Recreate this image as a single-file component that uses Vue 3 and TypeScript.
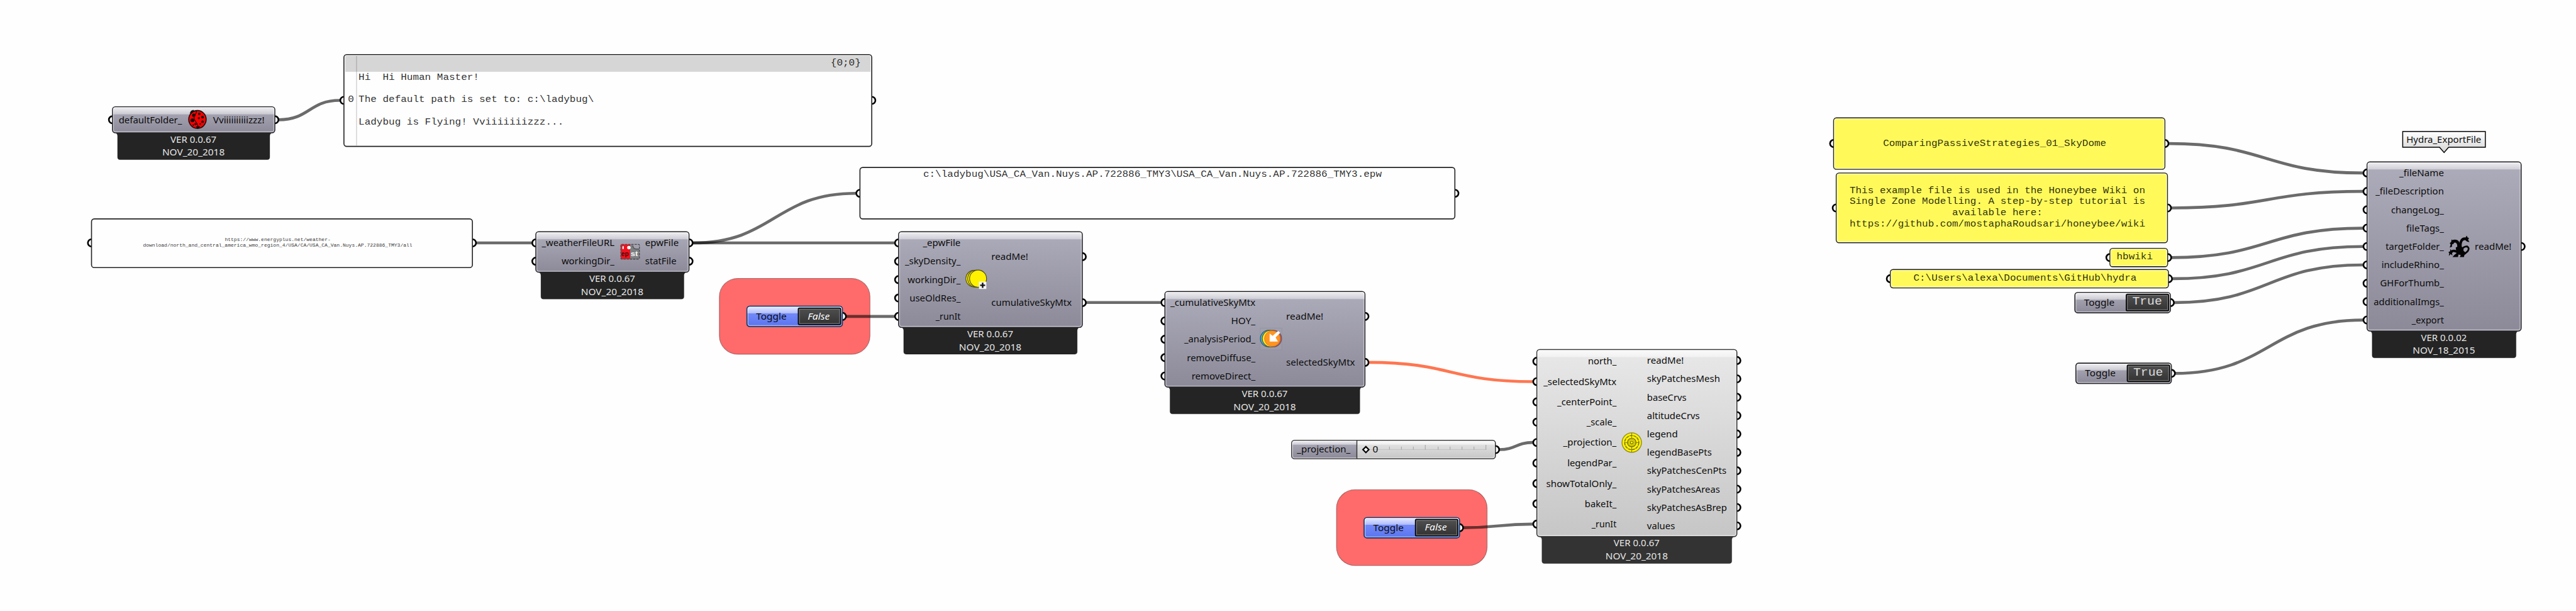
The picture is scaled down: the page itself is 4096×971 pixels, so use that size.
<script setup lang="ts">
type Label = [text: string, y: number, width: number]

interface Component {
  x: number
  right: number
  top: number
  bottom: number
  tone: 'slate' | 'light'
  inEdge: number
  outEdge: number
  inputs: Label[]
  outputs: Label[]
  version: string
  date: string
}

interface Panel {
  x: number
  right: number
  top: number
  bottom: number
  port: number
  tone: 'white' | 'yellow'
  lines: { text: string; x: number; y: number }[]
  small?: boolean
  tree?: boolean
}

interface Toggle {
  x: number
  y: number
  value: 'True' | 'False'
}

const ADVANCE = 13.14
const SMALL_ADVANCE = 6.59

const components: Component[] = [
  {
    x: 245, right: 598.5, top: 232.5, bottom: 289, tone: 'slate', inEdge: 396.4, outEdge: 464,
    inputs: [['defaultFolder_', 260.7, 138]],
    outputs: [['Vviiiiiiiiiizzz!', 260.7, 112]],
    version: 'VER 0.0.67', date: 'NOV_20_2018',
  },
  {
    x: 1167, right: 1500.5, top: 504.5, bottom: 592.5, tone: 'slate', inEdge: 1338, outEdge: 1405,
    inputs: [['_weatherFileURL', 528.7, 158], ['workingDir_', 568.7, 115]],
    outputs: [['epwFile', 528.7, 73], ['statFile', 568.7, 68]],
    version: 'VER 0.0.67', date: 'NOV_20_2018',
  },
  {
    x: 1957, right: 2357, top: 504.5, bottom: 712.5, tone: 'slate', inEdge: 2091.8, outEdge: 2159,
    inputs: [
      ['_epwFile', 528.7, 82], ['_skyDensity_', 568.7, 121], ['workingDir_', 608.7, 115],
      ['useOldRes_', 648.7, 111], ['_runIt', 688.7, 54],
    ],
    outputs: [['readMe!', 558.7, 80], ['cumulativeSkyMtx', 658.8, 175]],
    version: 'VER 0.0.67', date: 'NOV_20_2018',
  },
  {
    x: 2537, right: 2972.5, top: 634.5, bottom: 842.5, tone: 'slate', inEdge: 2734, outEdge: 2801,
    inputs: [
      ['_cumulativeSkyMtx', 658.5, 185], ['HOY_', 698.5, 53], ['_analysisPeriod_', 738.5, 155],
      ['removeDiffuse_', 778.5, 149], ['removeDirect_', 818.5, 139],
    ],
    outputs: [['readMe!', 688.7, 81], ['selectedSkyMtx', 788.8, 150]],
    version: 'VER 0.0.67', date: 'NOV_20_2018',
  },
  {
    x: 3347, right: 3782.5, top: 761, bottom: 1168, tone: 'light', inEdge: 3520.3, outEdge: 3586.8,
    inputs: [
      ['north_', 786.5, 62], ['_selectedSkyMtx', 830.7, 159], ['_centerPoint_', 874.8, 129],
      ['_scale_', 918.9, 65], ['_projection_', 963.2, 116], ['legendPar_', 1008, 107],
      ['showTotalOnly_', 1052.5, 153], ['bakeIt_', 1096.6, 69], ['_runIt', 1140.8, 54],
    ],
    outputs: [
      ['readMe!', 784.7, 80], ['skyPatchesMesh', 824.6, 159], ['baseCrvs', 864.7, 86],
      ['altitudeCrvs', 904.7, 115], ['legend', 944.7, 67], ['legendBasePts', 984.7, 141],
      ['skyPatchesCenPts', 1024.7, 173], ['skyPatchesAreas', 1064.7, 159],
      ['skyPatchesAsBrep', 1104.7, 174], ['values', 1144.7, 61],
    ],
    version: 'VER 0.0.67', date: 'NOV_20_2018',
  },
  {
    x: 5155, right: 5490.5, top: 352.6, bottom: 720.4, tone: 'slate', inEdge: 5322.3, outEdge: 5389.5,
    inputs: [
      ['_fileName', 376.6, 97], ['_fileDescription', 416.6, 149], ['changeLog_', 456.6, 115],
      ['fileTags_', 496.6, 82], ['targetFolder_', 536.6, 127], ['includeRhino_', 576.6, 136],
      ['GHForThumb_', 616.6, 139], ['additionalImgs_', 656.6, 153], ['_export', 696.6, 70],
    ],
    outputs: [['readMe!', 536.6, 80]],
    version: 'VER 0.0.02', date: 'NOV_18_2015',
  },
]

const panels: Panel[] = [
  {
    x: 749, right: 1898.5, top: 118.8, bottom: 318.6, port: 218.5, tone: 'white', tree: true,
    lines: [
      { text: '{0;0}', x: 1809, y: 142 },
      { text: 'Hi  Hi Human Master!', x: 780.8, y: 173.4 },
      { text: '0', x: 757.6, y: 222 },
      { text: 'The default path is set to: c:\\ladybug\\', x: 780.8, y: 222 },
      { text: 'Ladybug is Flying! Vviiiiiiizzz...', x: 780.8, y: 270.6 },
    ],
  },
  {
    x: 199.3, right: 1028.8, top: 476.5, bottom: 582.5, port: 528.7, tone: 'white', small: true,
    lines: [
      { text: 'https://www.energyplus.net/weather-', x: 489.5, y: 525 },
      { text: 'download/north_and_central_america_wmo_region_4/USA/CA/USA_CA_Van.Nuys.AP.722886_TMY3/all', x: 311.5, y: 537.2 },
    ],
  },
  {
    x: 1872.8, right: 3168.4, top: 364.5, bottom: 476.5, port: 420.8, tone: 'white',
    lines: [
      { text: 'c:\\ladybug\\USA_CA_Van.Nuys.AP.722886_TMY3\\USA_CA_Van.Nuys.AP.722886_TMY3.epw', x: 2010.5, y: 385 },
    ],
  },
  {
    x: 3993.3, right: 4714.6, top: 256.7, bottom: 368.5, port: 312.4, tone: 'yellow',
    lines: [{ text: 'ComparingPassiveStrategies_01_SkyDome', x: 4101, y: 317.4 }],
  },
  {
    x: 3999, right: 4720.2, top: 376.7, bottom: 528.3, port: 452.7, tone: 'yellow',
    lines: [
      { text: 'This example file is used in the Honeybee Wiki on', x: 4028, y: 420.3 },
      { text: 'Single Zone Modelling. A step-by-step tutorial is', x: 4028, y: 444.4 },
      { text: 'available here:', x: 4251.4, y: 468.5 },
      { text: 'https://github.com/mostaphaRoudsari/honeybee/wiki', x: 4028, y: 492.6 },
    ],
  },
  {
    x: 4595, right: 4720.6, top: 540.7, bottom: 580.6, port: 560.7, tone: 'yellow',
    lines: [{ text: 'hbwiki', x: 4609.5, y: 565 }],
  },
  {
    x: 4116.8, right: 4722.4, top: 586.7, bottom: 626.6, port: 606.7, tone: 'yellow',
    lines: [{ text: 'C:\\Users\\alexa\\Documents\\GitHub\\hydra', x: 4167, y: 610.7 }],
  },
]

const groups = [
  { x: 1566.6, y: 606 },
  { x: 2910.6, y: 1066 },
]

const toggles: Toggle[] = [
  { x: 1626, y: 666, value: 'False' },
  { x: 2970, y: 1126, value: 'False' },
  { x: 4518, y: 636, value: 'True' },
  { x: 4520.2, y: 790, value: 'True' },
]

const wires: [number, number, number, number, boolean?][] = [
  [607, 260.7, 740, 218.5],
  [1037, 528.7, 1158, 528.7],
  [1509, 528.7, 1864, 420.8],
  [1509, 528.7, 1948, 528.7],
  [1843, 688.7, 1948, 688.7],
  [2365, 658.5, 2528, 658.5],
  [2981, 788.8, 3338, 830.7, true],
  [3265, 978.7, 3338, 963.2],
  [3187, 1148.7, 3338, 1140.8],
  [4723, 312.4, 5146, 376.6],
  [4729, 452.7, 5146, 416.6],
  [4729, 560.7, 5146, 496.6],
  [4731, 606.7, 5146, 536.6],
  [4735, 658.7, 5146, 576.6],
  [4737, 812.7, 5146, 696.6],
]

const ticks = [3000, 3026, 3052, 3078, 3104, 3132, 3158, 3184, 3210, 3236]

function wirePath([x1, y1, x2, y2]: [number, number, number, number, boolean?]): string {
  const mid = (x1 + x2) / 2
  return `M${x1} ${y1}C${mid} ${y1} ${mid} ${y2} ${x2} ${y2}`
}

function footerPath(c: Component): string {
  const l = c.x + 11
  const r = c.right - 11
  const b = c.bottom
  return `M${l - 6} ${b}Q${l} ${b + 1} ${l} ${b + 7}V${b + 53}Q${l} ${b + 58.5} ${l + 5.5} ${b + 58.5}H${r - 5.5}Q${r} ${b + 58.5} ${r} ${b + 53}V${b + 7}Q${r} ${b + 1} ${r + 6} ${b}Z`
}

function glossPath(x: number, right: number, top: number, depth: number): string {
  return `M${x + 1} ${top + depth}V${top + 6}Q${x + 1} ${top + 1} ${x + 6} ${top + 1}H${right - 6}Q${right - 1} ${top + 1} ${right - 1} ${top + 6}V${top + depth}Z`
}
</script>

<template>
  <svg class="canvas" viewBox="0 0 5610 1330" preserveAspectRatio="none" role="img">
    <defs>
      <linearGradient id="slate" x1="0" y1="0" x2="0" y2="1">
        <stop offset="0" stop-color="#adacba" />
        <stop offset="1" stop-color="#8c8a99" />
      </linearGradient>
      <linearGradient id="light" x1="0" y1="0" x2="0" y2="1">
        <stop offset="0" stop-color="#e8e8e8" />
        <stop offset="1" stop-color="#c6c6c6" />
      </linearGradient>
      <linearGradient id="blue" x1="0" y1="0" x2="0" y2="1">
        <stop offset="0" stop-color="#7f95ff" />
        <stop offset="1" stop-color="#5a74ee" />
      </linearGradient>
      <linearGradient id="gloss" x1="0" y1="0" x2="0" y2="1">
        <stop offset="0" stop-color="#fff" stop-opacity="0.8" />
        <stop offset="1" stop-color="#fff" stop-opacity="0.42" />
      </linearGradient>
      <linearGradient id="dark" x1="0" y1="0" x2="0" y2="1">
        <stop offset="0" stop-color="#505050" />
        <stop offset="1" stop-color="#323232" />
      </linearGradient>
      <linearGradient id="tag" x1="0" y1="0" x2="0" y2="1">
        <stop offset="0" stop-color="#fff" />
        <stop offset="1" stop-color="#d4d4d4" />
      </linearGradient>
    </defs>

    <rect v-for="g in groups" :key="g.x" class="group" :x="g.x" :y="g.y" width="328" height="165" rx="40" />

    <path v-for="(w, i) in wires" :key="i" class="wire" :class="{ hot: w[4] }" :d="wirePath(w)" />

    <g v-for="p in panels" :key="p.x">
      <circle class="port" :cx="p.x" :cy="p.port" r="7.9" />
      <circle class="port" :cx="p.right" :cy="p.port" r="7.9" />
      <rect class="panel" :class="p.tone" :x="p.x" :y="p.top" :width="p.right - p.x" :height="p.bottom - p.top" rx="6" />
      <rect v-if="p.tone === 'yellow'" class="panel-edge" :x="p.x + 2" :y="p.top + 2" :width="p.right - p.x - 4" :height="p.bottom - p.top - 4" rx="4" />
      <template v-if="p.tree">
        <rect class="tree-head" :x="p.x + 3" :y="p.top + 2.5" :width="p.right - p.x - 6" height="35" />
        <line class="tree-rule" x1="776.5" :y1="p.top + 3" x2="776.5" :y2="p.bottom - 2" />
      </template>
      <text
        v-for="l in p.lines"
        :key="l.text"
        class="mono"
        :class="{ small: p.small }"
        :x="l.x"
        :y="l.y"
        :textLength="l.text.length * (p.small ? SMALL_ADVANCE : ADVANCE)"
        lengthAdjust="spacingAndGlyphs"
      >{{ l.text }}</text>
    </g>

    <g v-for="c in components" :key="c.x">
      <circle v-for="n in c.inputs" :key="n[0]" class="port" :cx="c.x" :cy="n[1]" r="7.9" />
      <circle v-for="n in c.outputs" :key="n[0]" class="port" :cx="c.right" :cy="n[1]" r="7.9" />
      <path class="footer" :class="c.tone" :d="footerPath(c)" />
      <rect class="body" :class="c.tone" :x="c.x" :y="c.top" :width="c.right - c.x" :height="c.bottom - c.top" rx="6" />
      <path class="gloss" :d="glossPath(c.x, c.right, c.top, 16.3)" />
      <rect class="rim" :x="c.x + 2" :y="c.top + 2" :width="c.right - c.x - 4" :height="c.bottom - c.top - 4" rx="4" />
      <text v-for="n in c.inputs" :key="n[0]" class="label end" :x="c.inEdge" :y="n[1] + 7.2" :textLength="n[2]" lengthAdjust="spacingAndGlyphs">{{ n[0] }}</text>
      <text v-for="n in c.outputs" :key="n[0]" class="label" :x="c.outEdge" :y="n[1] + 7.2" :textLength="n[2]" lengthAdjust="spacingAndGlyphs">{{ n[0] }}</text>
      <text class="label version" :x="(c.x + c.right) / 2 - 0.5" :y="c.bottom + 21.6" textLength="100" lengthAdjust="spacingAndGlyphs">{{ c.version }}</text>
      <text class="label version" :x="(c.x + c.right) / 2 - 0.5" :y="c.bottom + 50" textLength="136" lengthAdjust="spacingAndGlyphs">{{ c.date }}</text>
    </g>

    <g v-for="t in toggles" :key="t.x" :transform="`translate(${t.x} ${t.y})`">
      <circle class="port" cx="208.5" cy="22.7" r="7.9" />
      <rect class="toggle" :class="t.value" x="0.8" y="0.6" width="207.7" height="44.2" rx="6" />
      <path class="gloss" :d="glossPath(0.8, 208.5, 0.6, 15.6)" />
      <rect class="rim" x="2.8" y="2.6" width="203.7" height="40.2" rx="4" />
      <rect class="switch" x="112.6" y="4.6" width="92.2" height="36" rx="2.5" />
      <rect class="switch-rim" x="115" y="7" width="87.4" height="31.2" />
      <text class="label" x="20.6" y="29.4" textLength="66.5" lengthAdjust="spacingAndGlyphs">Toggle</text>
      <text v-if="t.value === 'False'" class="label off" x="133" y="29.2" textLength="48" lengthAdjust="spacingAndGlyphs">False</text>
      <text v-else class="mono on" x="125.6" y="27.3" textLength="65" lengthAdjust="spacingAndGlyphs">True</text>
    </g>

    <!-- number slider -->
    <g>
      <circle class="port" cx="3257" cy="978.7" r="7.9" />
      <rect class="body light" x="2813" y="958.6" width="443.6" height="40" rx="6" />
      <path class="slider-name" d="M2955 959.6H2819Q2814 959.6 2814 964.6V992.6Q2814 997.6 2819 997.6H2955Z" />
      <path class="gloss" :d="glossPath(2813, 3256.6, 958.6, 9.6)" />
      <rect class="rim" x="2815" y="960.6" width="439.6" height="36" rx="4" />
      <line class="slider-rule" x1="2955" y1="959" x2="2955" y2="998.6" />
      <line class="track" x1="2975" y1="978.6" x2="3237" y2="978.6" />
      <line v-for="x in ticks" :key="x" class="tick" :x1="x" :y1="x === 3104 || x === 3236 ? 968.3 : 972" :x2="x" y2="979" />
      <path class="grip" d="M2974.6 972.3L2981 978.7L2974.6 985.1L2968.2 978.7Z" />
      <text class="label end" x="2941" y="985.5" textLength="116.5" lengthAdjust="spacingAndGlyphs">_projection_</text>
      <text class="label" x="2989.3" y="985.5" textLength="12" lengthAdjust="spacingAndGlyphs">0</text>
    </g>

    <!-- name tag -->
    <g>
      <path class="tag" d="M5232.6 286.4H5412.6V320.5H5332.6L5322.7 332L5312.8 320.5H5232.6Z" />
      <text class="label" x="5240.5" y="310.9" textLength="163" lengthAdjust="spacingAndGlyphs">Hydra_ExportFile</text>
    </g>

    <!-- ladybug -->
    <g transform="translate(430 260)">
      <path d="M-14 -19L-9 -21L-5 -17L-10 -12L-17 -13Z" fill="#161616" />
      <ellipse rx="19" ry="19.4" fill="#f00" stroke="#1c1010" stroke-width="2.2" />
      <path d="M-15 -12Q-8 -20 -2 -18Q-2 -13 -7 -9Q-9 -2 -3 6Q2 12 1 19" fill="none" stroke="#161010" stroke-width="1.6" />
      <g fill="#140c0c">
        <ellipse cx="-8" cy="-9" rx="3.6" ry="3.8" />
        <ellipse cx="4" cy="-12" rx="3" ry="2.8" />
        <circle cx="11" cy="-5" r="3" />
        <circle cx="3" cy="-3" r="2.4" />
        <circle cx="-11" cy="2" r="4.2" />
        <circle cx="-4" cy="10" r="2.6" />
        <circle cx="11" cy="5" r="2.8" />
        <circle cx="6" cy="10" r="2" />
        <circle cx="-9" cy="12" r="1.6" />
        <path d="M-3 15H6L2 20H-1Z" />
      </g>
    </g>

    <!-- epw / stat download -->
    <g transform="translate(1351 531)">
      <rect x="1" y="1" width="20.5" height="32" fill="#f0131e" />
      <path d="M21.5 1H26L30 11H41V33H21.5Z" fill="#7d8082" />
      <path d="M26 2H41V11H31Z" fill="#a2a1ad" />
      <rect x="1" y="1" width="40.5" height="32" rx="2" fill="none" stroke="#4a4a4e" stroke-width="1.8" stroke-dasharray="5 2" />
      <path d="M27 3Q28 11 34 11H41" fill="none" stroke="#55565a" stroke-width="2" />
      <circle cx="18.6" cy="8" r="3.8" fill="#fff" />
      <rect x="4.5" y="5" width="3" height="6" fill="#fff" />
      <text class="badge" x="2" y="26" textLength="16" lengthAdjust="spacingAndGlyphs" fill="#4c0a0c">ep</text>
      <text class="badge" x="22.5" y="26" textLength="16" lengthAdjust="spacingAndGlyphs" fill="#f4f4f4">st</text>
    </g>

    <!-- cumulative sky -->
    <g transform="translate(2102 586)">
      <g fill="#fff200" stroke="#4c4a1a" stroke-width="1.6">
        <ellipse cx="19" cy="20.5" rx="17.5" ry="18" />
        <ellipse cx="23" cy="20.5" rx="17.5" ry="18.5" />
        <ellipse cx="28" cy="20.5" rx="18.5" ry="18.8" />
      </g>
      <rect x="30" y="27" width="16" height="16" fill="#f6f6f6" />
      <path d="M38 29.5V40.5M32.5 35H43.5" stroke="#111" stroke-width="3.4" />
    </g>

    <!-- selected sky matrix -->
    <g transform="translate(2768 737)">
      <rect x="-23.5" y="-23" width="47" height="47.5" fill="#a09fae" fill-opacity="0.5" stroke="#8f8da0" stroke-width="0.8" />
      <circle cx="5" r="18.2" fill="#b9525c" stroke="#5c5a66" stroke-width="1.4" />
      <circle cx="-5" r="18.2" fill="#33b5df" stroke="#3e4a55" stroke-width="1.4" />
      <circle cx="-1" r="18" fill="#ffe81a" stroke="#55502a" stroke-width="1.4" />
      <circle cx="3" r="17.2" fill="#ff9420" stroke="#c56a14" stroke-width="0.8" />
      <path d="M15.5 -16.5L20 -12.5L10 -2.5L15 6.5H-3V-11L3.5 -6Z" fill="#fff" />
    </g>

    <!-- sky dome -->
    <g transform="translate(3553.6 963.4)" fill="none">
      <circle r="21.2" fill="#fff200" stroke="#8a8420" stroke-width="1.8" />
      <g stroke="#6d6a14" stroke-width="2">
        <circle r="15.4" stroke-dasharray="7 1.4" />
        <circle r="9.2" />
        <circle r="6.4" stroke-width="1" />
        <circle r="3.2" stroke-width="1.6" />
        <path d="M0 -21V-9M0 9V21M-16 0H-9M9 0H16" stroke-width="1.2" />
      </g>
    </g>

    <!-- hydra -->
    <g transform="translate(5332 512)" fill="#050505" stroke="#050505">
      <path d="M9 14Q19 10 22 19Q23 26 24 32" fill="none" stroke-width="6.4" />
      <path d="M27 29Q25 20 28 13Q31 6 40 8" fill="none" stroke-width="5.6" />
      <path d="M27 33Q33 24 41 24.5Q47 28 42 35L35 41" fill="none" stroke-width="3.8" />
      <path d="M22 38Q12 31 6 36" fill="none" stroke-width="5" />
      <g stroke="none">
        <path d="M7 9L9 12L15 12L11 19L8 20L8 25L3 27L5 20L3 17L6 15Z" />
        <path d="M38 4L40 1L42 5L45 6L43 10L46 15L41 14L37 11Z" />
        <path d="M4 30L7 34L12 35L8 39L9 44L5 41L1 45L2 39L0 37L4 35Z" />
        <path d="M16 27Q25 20 33 28L33 34L39 39L35 43L34 47.5H25L27 43L22 42L21 47.5H9L13 43L18 39Z" />
      </g>
    </g>
  </svg>
</template>

<style scoped>
.canvas {
  display: block;
  width: 100vw;
  height: 100vh;
  background: #fefefe;
}
.group {
  fill: #ff6b6b;
  stroke: rgba(70, 30, 30, 0.5);
  stroke-width: 1.4;
}
.wire {
  fill: none;
  stroke: rgba(0, 0, 0, 0.58);
  stroke-width: 6.4;
}
.wire.hot {
  stroke: #ff7650;
}
.port {
  fill: #fff;
  stroke: #000;
  stroke-width: 3.6;
}
.panel {
  stroke: #222;
  stroke-width: 2.2;
}
.panel.white {
  fill: #fefefe;
}
.panel.yellow {
  fill: #fffa5a;
}
.panel-edge {
  fill: none;
  stroke: #fffdc4;
  stroke-width: 1.8;
}
.tree-head {
  fill: #d6d6d6;
}
.tree-rule {
  stroke: rgba(0, 0, 0, 0.25);
  stroke-width: 1.4;
}
.body {
  stroke: #242428;
  stroke-width: 2.2;
}
.body.slate {
  fill: url(#slate);
}
.body.light {
  fill: url(#light);
  stroke: #333;
}
.gloss {
  fill: url(#gloss);
}
.rim {
  fill: none;
  stroke: rgba(255, 255, 255, 0.5);
  stroke-width: 1.8;
}
.footer {
  stroke: rgba(0, 0, 0, 0.4);
  stroke-width: 1;
}
.footer.slate {
  fill: #242424;
}
.footer.light {
  fill: #333;
}
.label {
  font-family: "Noto Sans", "Open Sans", sans-serif;
  font-size: 20.4px;
  fill: #0c0c0c;
}
.end {
  text-anchor: end;
}
.version {
  text-anchor: middle;
  fill: #e6e6e6;
}
.mono {
  font-family: "Liberation Mono", monospace;
  font-size: 19.4px;
  fill: rgba(0, 0, 0, 0.84);
  white-space: pre;
}
.mono.small {
  font-size: 10px;
}
.mono.on {
  font-size: 24px;
  fill: #dcdcdc;
}
.label.off {
  font-style: italic;
  fill: #fff;
}
.toggle {
  stroke-width: 2.4;
}
.toggle.False {
  fill: url(#blue);
  stroke: #0b3566;
}
.toggle.True {
  fill: url(#slate);
  stroke: #242428;
}
.switch {
  fill: url(#dark);
  stroke: #0a0a0a;
  stroke-width: 2.4;
}
.switch-rim {
  fill: none;
  stroke: #808080;
  stroke-width: 1.3;
}
.slider-name {
  fill: url(#slate);
}
.slider-rule {
  stroke: #333;
  stroke-width: 2;
}
.track {
  stroke: #bcbcbc;
  stroke-width: 1;
}
.tick {
  stroke: #aaa;
  stroke-width: 1.6;
}
.grip {
  fill: #fff;
  stroke: #000;
  stroke-width: 3;
}
.tag {
  fill: url(#tag);
  stroke: #000;
  stroke-width: 2;
}
.badge {
  font-family: "Liberation Sans", sans-serif;
  font-size: 14px;
  font-weight: 700;
  stroke: none;
}
</style>

<style>
html,
body {
  margin: 0;
  overflow: hidden;
  background: #fefefe;
}
</style>
